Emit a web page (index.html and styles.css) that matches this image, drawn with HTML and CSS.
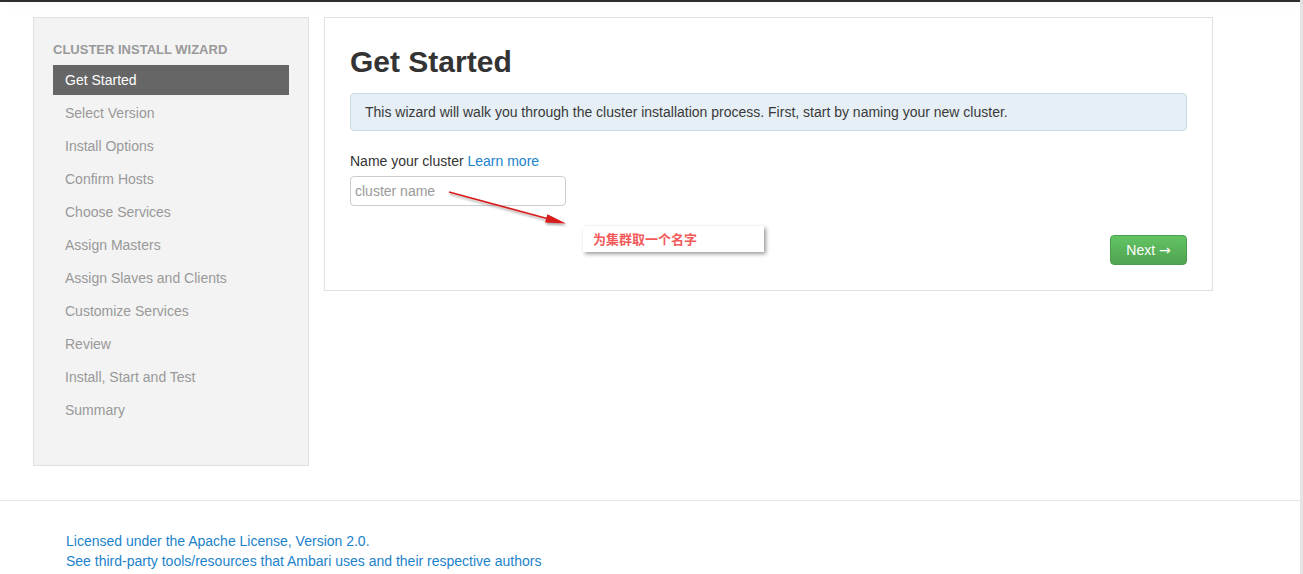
FILE: index.html
```html
<!DOCTYPE html>
<html>
<head>
<meta charset="utf-8">
<link rel="stylesheet" href="styles.css">
</head>
<body>
<div class="page">
  <div class="topbar"></div>
  <div class="wizard">
    <aside class="sidebar">
      <div class="nav-header">CLUSTER INSTALL WIZARD</div>
      <ul class="steps">
        <li class="step active">Get Started</li>
        <li class="step">Select Version</li>
        <li class="step">Install Options</li>
        <li class="step">Confirm Hosts</li>
        <li class="step">Choose Services</li>
        <li class="step">Assign Masters</li>
        <li class="step">Assign Slaves and Clients</li>
        <li class="step">Customize Services</li>
        <li class="step">Review</li>
        <li class="step">Install, Start and Test</li>
        <li class="step">Summary</li>
      </ul>
    </aside>
    <main class="panel">
      <h2 class="title">Get Started</h2>
      <div class="alert">This wizard will walk you through the cluster installation process. First, start by naming your new cluster.</div>
      <div class="label">Name your cluster <a class="link" href="#">Learn more</a></div>
      <input class="input" type="text" placeholder="cluster name">
      <div class="actions">
        <button class="btn-next">Next <span class="arr">→</span></button>
      </div>
      <svg class="arrow" width="130" height="60" viewBox="0 0 130 60">
        <defs>
          <filter id="sh" x="-10%" y="-50%" width="130%" height="200%">
            <feDropShadow dx="1" dy="2" stdDeviation="1.2" flood-color="#000" flood-opacity="0.35"/>
          </filter>
        </defs>
        <g filter="url(#sh)">
          <line x1="4" y1="4" x2="102" y2="30.5" stroke="#d81e1e" stroke-width="1.6"/>
          <polygon points="121,35.5 100,34.6 102.4,26.2" fill="#d81e1e"/>
        </g>
      </svg>
      <div class="note">为集群取一个名字</div>
    </main>
  </div>
  <footer class="footer">
    <a class="link" href="#">Licensed under the Apache License, Version 2.0.</a>
    <a class="link" href="#">See third-party tools/resources that Ambari uses and their respective authors</a>
  </footer>
</div>
</body>
</html>
```
FILE: styles.css
```css
html, body {
  margin: 0;
  padding: 0;
}
body {
  background: #e4e4e4;
  font-family: "Liberation Sans", Arial, Helvetica, sans-serif;
  font-size: 14px;
  line-height: 20px;
  color: #333;
}
.page {
  background: #fff;
  margin-right: 3px;
  min-height: 574px;
}
.topbar {
  height: 2px;
  background: #2e2e2e;
  box-shadow: 0 2px 8px rgba(0, 0, 0, 0.08);
}
.wizard {
  display: flex;
  align-items: flex-start;
  gap: 15px;
  padding: 15px 0 0 33px;
}
.sidebar {
  width: 236px;
  background: #f3f3f3;
  border: 1px solid #e0e0e0;
  padding: 22px 19px 37px;
}
.nav-header {
  font-size: 13px;
  font-weight: bold;
  color: #999;
  line-height: 20px;
  margin-bottom: 5px;
}
.steps {
  list-style: none;
  margin: 0;
  padding: 0;
}
.step {
  padding: 5px 12px;
  line-height: 20px;
  margin-bottom: 3px;
  color: #999;
}
.step.active {
  background: #666;
  color: #fff;
}
.panel {
  position: relative;
  width: 837px;
  border: 1px solid #e0e0e0;
  padding: 24px 25px 25px;
  background: #fff;
}
.title {
  margin: 0;
  font-size: 30px;
  line-height: 40px;
  font-weight: bold;
  color: #333;
}
.alert {
  margin-top: 11px;
  padding: 8px 14px;
  background: #e5eff5;
  border: 1px solid #c9dbe4;
  border-radius: 4px;
  color: #3a3a3a;
}
.label {
  margin-top: 20px;
}
.link {
  color: #1b82cb;
  text-decoration: none;
}
.input {
  display: block;
  box-sizing: border-box;
  margin-top: 5px;
  width: 216px;
  height: 30px;
  padding: 4px 4px;
  border: 1px solid #ccc;
  border-radius: 4px;
  font-family: inherit;
  font-size: 14px;
  line-height: 20px;
  color: #555;
}
.input::placeholder {
  color: #9a9a9a;
}
.actions {
  display: flex;
  justify-content: flex-end;
  margin-top: 29px;
}
.btn-next {
  height: 30px;
  width: 77px;
  padding: 4px 0;
  border: 1px solid #4a9d4a;
  border-radius: 4px;
  background: linear-gradient(#62c462, #51a351);
  color: #fff;
  font-family: inherit;
  font-size: 14px;
  line-height: 20px;
}
.arr {
  font-family: "DejaVu Sans", sans-serif;
  font-size: 14px;
}
.arrow {
  position: absolute;
  left: 120px;
  top: 170px;
}
.note {
  position: absolute;
  left: 258px;
  top: 208px;
  width: 171px;
  height: 26px;
  padding-left: 10px;
  background: #fff;
  box-shadow: 2px 2px 4px rgba(0, 0, 0, 0.4);
  color: #f25a5a;
  font-family: "Noto Sans CJK SC", sans-serif;
  font-weight: bold;
  font-size: 13px;
  line-height: 26px;
}
.footer {
  margin-top: 34px;
  border-top: 1px solid #e5e5e5;
  padding: 30px 0 0 66px;
  display: flex;
  flex-direction: column;
  align-items: flex-start;
}
```
